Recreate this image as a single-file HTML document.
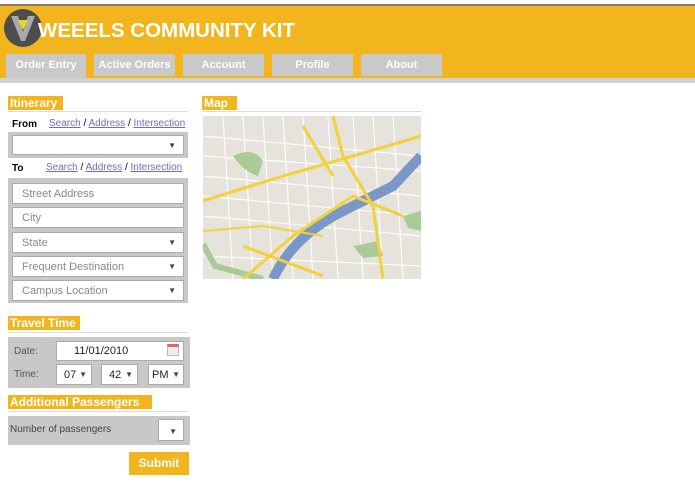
<!DOCTYPE html>
<html><head><style>
*{margin:0;padding:0;box-sizing:border-box}
body{width:695px;height:494px;background:#fff;font-family:"Liberation Sans",sans-serif;position:relative;overflow:hidden}
.a{position:absolute}
.hdr{left:0;top:4px;width:695px;height:74px;background:#f2b51e;border-top:2px solid #8a7a60}
.tab{top:54px;height:22px;background:#c9c9c9;color:#fff;font-size:11px;font-weight:bold;text-align:center;line-height:22px}
.lbl{background:#f2b51e;color:#fff;font-weight:bold;font-size:12px;height:14px;line-height:14px;padding-left:2px}
.box{background:#c8c8c8}
.in{position:absolute;background:#fff;border:1px solid #aaa;font-size:11px;color:#888;padding-left:9px;line-height:20px}
.arr{position:absolute;right:7px;top:0;font-size:8px;color:#444}
.lk{color:#6b6bc9;text-decoration:underline;font-size:10px}
</style></head><body>
<div class="a hdr"></div>
<div class="a" style="left:4px;top:9px;width:38px;height:38px;border-radius:50%;background:#4d4d4d"></div>
<svg class="a" style="left:9px;top:14px" width="28" height="28"><polygon points="2,2 9,2 14,18 19,2 26,2 16,27 12,27" fill="#aaa"/><polygon points="9,6 19,6 14,16" fill="#f2d31e"/></svg>
<div class="a" style="left:38px;top:19px;color:#fff;font-size:20.5px;font-weight:bold">WEEELS COMMUNITY KIT</div>
<div class="a tab" style="left:6px;width:80px;height:24px">Order Entry</div>
<div class="a tab" style="left:94px;width:81px">Active Orders</div>
<div class="a tab" style="left:183px;width:81px">Account</div>
<div class="a tab" style="left:272px;width:81px">Profile</div>
<div class="a tab" style="left:361px;width:81px">About</div>
<div class="a" style="left:0;top:78px;width:695px;height:5px;background:#d0d0d0"></div>

<div class="a lbl" style="left:8px;top:96px;width:55px">Itinerary</div>
<div class="a" style="left:8px;top:111px;width:180px;height:1px;background:#ddd"></div>
<div class="a" style="left:12px;top:119px;font-size:10px;font-weight:bold">From</div>
<div class="a" style="left:49px;top:118px;font-size:10px"><span class="lk">Search</span> / <span class="lk">Address</span> / <span class="lk">Intersection</span></div>
<div class="a box" style="left:8px;top:132px;width:180px;height:26px"></div>
<div class="in" style="left:12px;top:135px;width:172px;height:20px"><span class="arr">▼</span></div>
<div class="a" style="left:12px;top:163px;font-size:10px;font-weight:bold">To</div>
<div class="a" style="left:46px;top:162px;font-size:10px"><span class="lk">Search</span> / <span class="lk">Address</span> / <span class="lk">Intersection</span></div>
<div class="a box" style="left:8px;top:178px;width:180px;height:125px"></div>
<div class="in" style="left:12px;top:183px;width:172px;height:21px">Street Address</div>
<div class="in" style="left:12px;top:207px;width:172px;height:21px">City</div>
<div class="in" style="left:12px;top:232px;width:172px;height:21px">State<span class="arr">▼</span></div>
<div class="in" style="left:12px;top:256px;width:172px;height:21px">Frequent Destination<span class="arr">▼</span></div>
<div class="in" style="left:12px;top:280px;width:172px;height:21px">Campus Location<span class="arr">▼</span></div>

<div class="a lbl" style="left:8px;top:316px;width:72px">Travel Time</div>
<div class="a" style="left:8px;top:332px;width:180px;height:1px;background:#ddd"></div>
<div class="a box" style="left:8px;top:337px;width:182px;height:51px"></div>
<div class="a" style="left:14px;top:346px;font-size:10px;color:#555">Date:</div>
<div class="in" style="left:56px;top:341px;width:128px;height:20px;color:#222;padding-left:17px;line-height:19px">11/01/2010</div>
<div class="a" style="left:167px;top:344px;width:12px;height:12px;background:#eee;border:1px solid #bbb;border-top:3px solid #d66"></div>
<div class="a" style="left:14px;top:369px;font-size:10px;color:#555">Time:</div>
<div class="in" style="left:56px;top:364px;width:36px;height:21px;color:#222;padding-left:7px">07<span class="arr" style="right:4px">▼</span></div>
<div class="in" style="left:101px;top:364px;width:37px;height:21px;color:#222;padding-left:7px">42<span class="arr" style="right:4px">▼</span></div>
<div class="in" style="left:148px;top:364px;width:36px;height:21px;color:#222;padding-left:3px">PM<span class="arr" style="right:3px">▼</span></div>

<div class="a lbl" style="left:8px;top:395px;width:144px">Additional Passengers</div>
<div class="a" style="left:8px;top:411px;width:180px;height:1px;background:#ddd"></div>
<div class="a box" style="left:8px;top:416px;width:182px;height:29px"></div>
<div class="a" style="left:10px;top:424px;font-size:10px;color:#444">Number of passengers</div>
<div class="in" style="left:158px;top:419px;width:26px;height:22px"><span class="arr" style="right:6px;top:2px">▼</span></div>
<div class="a" style="left:129px;top:452px;width:60px;height:23px;background:#f2b51e;color:#fff;font-weight:bold;font-size:12px;text-align:center;line-height:23px">Submit</div>

<div class="a lbl" style="left:202px;top:96px;width:35px">Map</div>
<div class="a" style="left:202px;top:111px;width:220px;height:1px;background:#ddd"></div>
<svg class="a" style="left:203px;top:116px" width="218" height="163">
<rect width="218" height="163" fill="#e6e3dc"/>
<g stroke="#fff" stroke-width="1.2" opacity=".9">
<path d="M0 20 L218 40 M0 60 L218 80 M0 100 L218 120 M0 140 L218 150 M20 0 L30 163 M60 0 L70 163 M100 0 L110 163 M150 0 L160 163 M190 0 L200 163 M0 40 L218 55 M0 80 L218 100 M40 0 L50 163 M80 0 L90 163 M125 0 L135 163 M170 0 L180 163"/>
</g>
<path d="M30 40 Q50 30 60 45 L55 60 Q40 55 30 40Z" fill="#a9cc96"/>
<path d="M200 100 L218 95 L218 115 L205 112Z" fill="#a9cc96"/>
<path d="M150 130 L175 125 L180 140 L160 142Z" fill="#a9cc96"/>
<path d="M0 128 L12 150 L60 163" stroke="#a9cc96" stroke-width="6" fill="none"/>
<path d="M70 163 Q90 120 140 95 Q170 80 190 70 L218 40" stroke="#7b97c7" stroke-width="10" fill="none"/>
<path d="M130 0 L140 40 L170 90 L180 163 M0 85 L80 60 L150 40 L218 20 M40 163 L90 120 L150 80 L200 100 M100 10 L130 60 M40 130 L120 160" stroke="#f0d23a" stroke-width="3" fill="none"/>
<path d="M0 115 L60 110 L120 120" stroke="#f0d23a" stroke-width="2" fill="none"/>
</svg>
</body></html>
